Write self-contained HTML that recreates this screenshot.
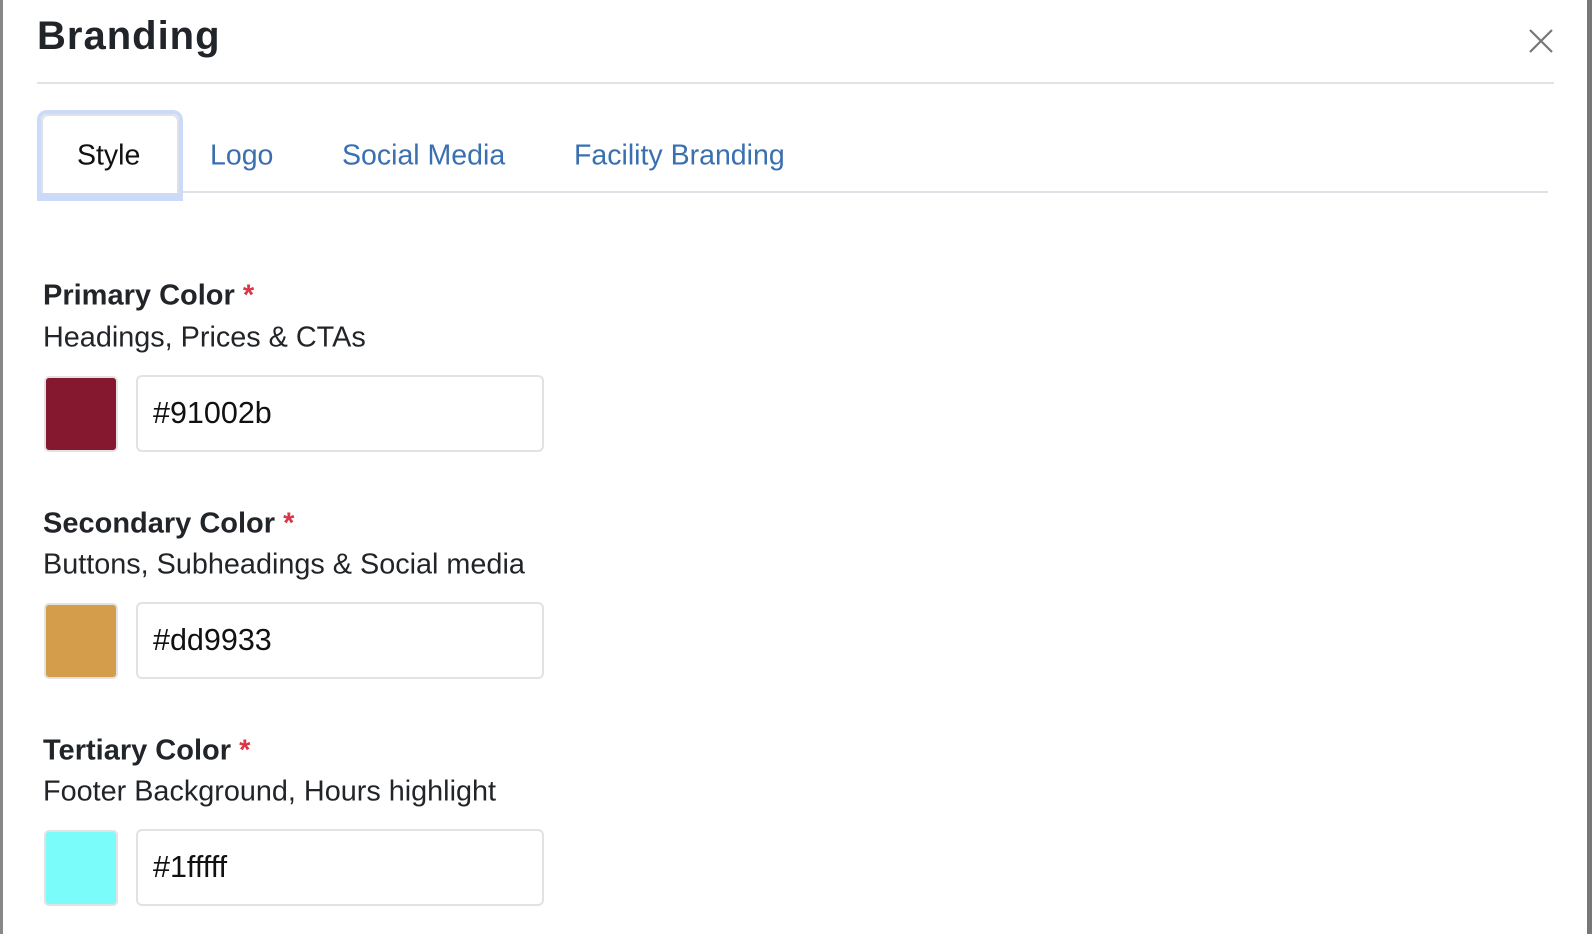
<!DOCTYPE html>
<html><head><meta charset="utf-8"><style>
body{margin:0;width:1592px;height:934px;background:#fff;position:relative;overflow:hidden;font-family:"Liberation Sans",Helvetica,Arial,sans-serif;color:#212529}
.lb{position:absolute;left:0;top:0;width:3px;height:934px;background:#888}
.rb{position:absolute;left:1587px;top:0;width:5px;height:934px;background:#777}
h1{position:absolute;left:37px;top:14px;margin:0;font-size:40px;font-weight:bold;letter-spacing:1px}
.hr{position:absolute;left:37px;top:82px;width:1517px;height:2px;background:#e2e3e5}
.close{position:absolute;left:1529px;top:29px}
.tabline{position:absolute;left:37px;top:191px;width:1511px;height:2px;background:#dee2e6}
.tab{position:absolute;top:156px;font-size:28.5px;color:#3a6fb0;transform:translateY(-50%)}
.active{position:absolute;left:37px;top:110px;width:138px;height:83px;border:4px solid #cbdaf8;border-bottom:none;border-radius:10px 10px 0 0;background:#fff}
.active:after{content:"";position:absolute;left:0;top:0;right:0;bottom:0;border:2px solid #dee2e6;border-bottom:none;border-radius:7px 7px 0 0}
.abot{position:absolute;left:37px;top:193px;width:146px;height:8px;background:#cbdaf8}
.lab{position:absolute;left:43px;font-size:29px;font-weight:bold;transform:translateY(-50%)}
.lab span{color:#dc3545}
.sub{position:absolute;left:43px;font-size:28.8px;transform:translateY(-50%)}
.sw{position:absolute;left:44px;width:70px;height:72px;border:2px solid #e2e2e2;border-radius:5px}
.in{position:absolute;left:136px;width:408px;height:77px;border:2px solid #e2e2e2;border-radius:6px;box-sizing:border-box;font-size:30.5px;line-height:73px;padding-left:15px;color:#111}
</style></head><body>
<div class="lb"></div><div class="rb"></div>
<h1>Branding</h1>
<svg class="close" width="24" height="24" viewBox="0 0 24 24"><path d="M1 1L23 23M23 1L1 23" stroke="#777" stroke-width="2.2"/></svg>
<div class="hr"></div>
<div class="tabline"></div>
<div class="active"></div><div class="abot"></div>
<div class="tab" style="left:77px;color:#111">Style</div>
<div class="tab" style="left:210px">Logo</div>
<div class="tab" style="left:342px">Social Media</div>
<div class="tab" style="left:574px">Facility Branding</div>

<div class="lab" style="top:296px">Primary Color <span>*</span></div>
<div class="sub" style="top:338px">Headings, Prices &amp; CTAs</div>
<div class="sw" style="top:376px;background:#85182f"></div>
<div class="in" style="top:375px">#91002b</div>

<div class="lab" style="top:524px">Secondary Color <span>*</span></div>
<div class="sub" style="top:565px">Buttons, Subheadings &amp; Social media</div>
<div class="sw" style="top:603px;background:#d39d4b"></div>
<div class="in" style="top:602px">#dd9933</div>

<div class="lab" style="top:751px">Tertiary Color <span>*</span></div>
<div class="sub" style="top:792px">Footer Background, Hours highlight</div>
<div class="sw" style="top:830px;background:#7afcfb"></div>
<div class="in" style="top:829px">#1fffff</div>
</body></html>
